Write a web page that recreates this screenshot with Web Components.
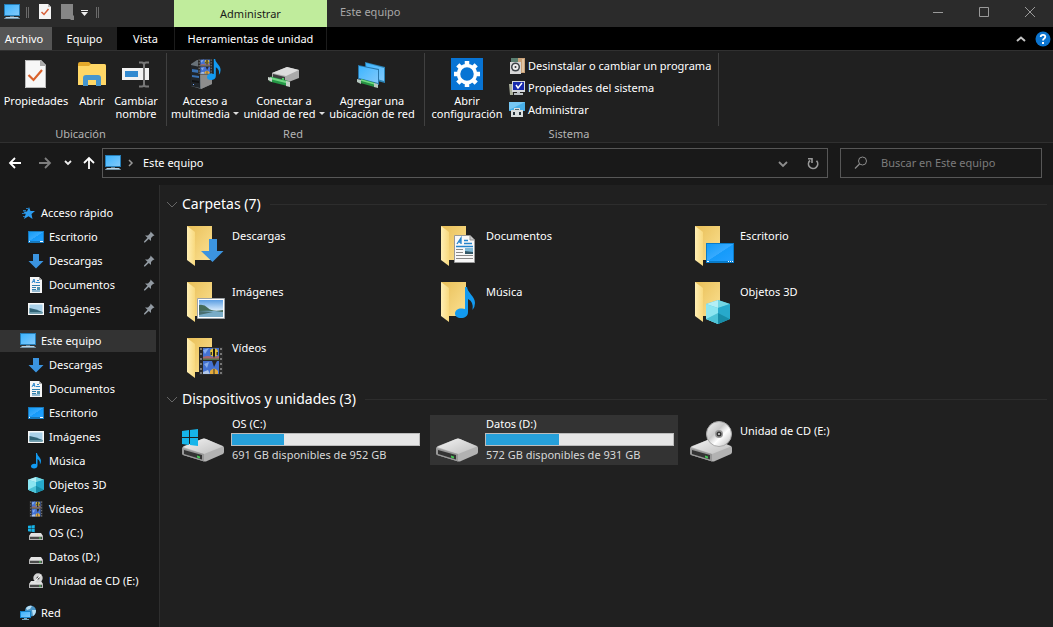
<!DOCTYPE html>
<html lang="es">
<head>
<meta charset="utf-8">
<meta name="viewport" content="width=device-width, initial-scale=1">
<title>Este equipo</title>
<style>
html, body { height: 100%; }
body { margin: 0; background: #202020; color: #fff; font: 11px/16px "Segoe UI", "Noto Sans", "Open Sans", sans-serif; }
</style>
</head>
<body>
<explorer-window></explorer-window>

<template id="t-window">
<style>
:host { display: flex; flex-direction: column; min-height: 100vh; }
.body { flex: 1; display: flex; }
explorer-content { flex: 1; min-width: 0; }
</style>
<title-bar></title-bar>
<explorer-ribbon></explorer-ribbon>
<address-row></address-row>
<div class="body">
  <nav-tree></nav-tree>
  <explorer-content></explorer-content>
</div>
</template>

<template id="t-title">
<style>
:host { display: flex; flex-direction: column; background: #2b2b2b; }
button, a { font: inherit; color: inherit; border: 0; background: none; padding: 0; text-decoration: none; display: block; }
.top, .tabs { display: grid; grid-template-columns: 174px 153px 1fr auto; }
.top { height: 27px; }
.quick { display: flex; align-items: center; height: 24px; padding-left: 4px; }
.quick button { height: 16px; }
.sep { width: 1px; height: 11px; border: solid #6a6a6a; border-width: 0 1px; }
.s1 { margin: 0 7px 0 6px; }
.s2 { margin-left: 4px; }
.ctx { background: #c0ec9c; color: #1a1a1a; text-align: center; line-height: 28px; }
.title { padding-left: 13px; line-height: 24px; color: #a8a8a8; font-size: 11px; font-weight: 400; margin: 0; }
.win { display: flex; height: 24px; }
.win button { width: 46px; height: 24px; display: grid; place-items: center; }
.tabs { background: #000; height: 23px; line-height: 24px; text-align: center; }
.tabs button { line-height: 24px; }
.left { display: grid; grid-template-columns: 52px 65px 1fr; }
.file { background: #555; padding-right: 4px; }
.active { background: #202020; }
.tool { border: solid #1c1c1c; border-width: 0 1px; }
.end { display: flex; align-items: center; gap: 8px; padding-right: 2px; }
</style>
<div class="top">
  <div class="quick">
    <button aria-label="Sistema"><win-icon name="pc" size="16"></win-icon></button>
    <span class="sep s1"></span>
    <button aria-label="Propiedades"><win-icon name="check" size="16"></win-icon></button>
    <button aria-label="Nueva carpeta" style="margin-left:8px"><win-icon name="blank" size="16"></win-icon></button>
    <button aria-label="Personalizar"><win-icon name="more" size="16"></win-icon></button>
    <span class="sep s2"></span>
  </div>
  <div class="ctx">Administrar</div>
  <h1 class="title">Este equipo</h1>
  <div class="win">
    <button aria-label="Minimizar"><win-icon name="min" size="12"></win-icon></button>
    <button aria-label="Maximizar"><win-icon name="max" size="12"></win-icon></button>
    <button aria-label="Cerrar"><win-icon name="close" size="12"></win-icon></button>
  </div>
</div>
<div class="tabs">
  <div class="left"><button class="file">Archivo</button><button class="active">Equipo</button><button>Vista</button></div>
  <button class="tool">Herramientas de unidad</button>
  <span></span>
  <div class="end">
    <button aria-label="Minimizar la cinta"><win-icon name="caret-up" size="12"></win-icon></button>
    <button aria-label="Ayuda"><win-icon name="help" size="16"></win-icon></button>
  </div>
</div>
</template>

<template id="t-ribbon">
<style>
:host { display: flex; background: #202020; border: solid #303030; border-width: 1px 0; min-height: 91px; }
.stack { display: flex; flex-direction: column; padding-top: 4px; }
</style>
<ribbon-group label="Ubicación" style="--w:167px">
  <ribbon-button icon="props" style="--w:72px">Propiedades</ribbon-button>
  <ribbon-button icon="open" style="--w:40px">Abrir</ribbon-button>
  <ribbon-button icon="rename" style="--w:48px">Cambiar<br>nombre</ribbon-button>
</ribbon-group>
<ribbon-group label="Red" style="--w:258px">
  <ribbon-button icon="media" menu style="--w:76px">Acceso a<br>multimedia</ribbon-button>
  <ribbon-button icon="netdrive" menu style="--w:82px">Conectar a<br>unidad de red</ribbon-button>
  <ribbon-button icon="netplace" style="--w:94px">Agregar una<br>ubicación de red</ribbon-button>
</ribbon-group>
<ribbon-group label="Sistema" style="--w:294px">
  <ribbon-button icon="settings" style="--w:84px">Abrir<br>configuración</ribbon-button>
  <div class="stack">
    <ribbon-line icon="uninstall">Desinstalar o cambiar un programa</ribbon-line>
    <ribbon-line icon="sysprops">Propiedades del sistema</ribbon-line>
    <ribbon-line icon="manage">Administrar</ribbon-line>
  </div>
</ribbon-group>
</template>

<template id="t-group">
<style>
:host { display: grid; grid-template-rows: 75px 16px; width: var(--w); box-sizing: border-box; background: linear-gradient(#404040, #404040) right 0 top 2px / 1px 73px no-repeat; }
.items { display: flex; }
.label { text-align: center; color: #b4b4b4; padding-right: 6px; line-height: 16px; }
</style>
<div class="items"><slot></slot></div>
<div class="label"></div>
</template>

<template id="t-button">
<style>
:host { display: block; width: var(--w); }
button { font: inherit; color: inherit; border: 0; background: none; padding: 7px 0 0; width: 100%; display: flex; flex-direction: column; align-items: center; line-height: 13px; white-space: nowrap; }
span { margin-top: 4px; }
i { display: none; }
:host([menu]) i { display: inline-block; border: 3px solid transparent; border-top-color: #ddd; border-bottom: 0; margin-left: 3px; vertical-align: 3px; }
</style>
<button><win-icon size="32"></win-icon><span><slot></slot><i></i></span></button>
</template>

<template id="t-line">
<style>
:host { display: block; }
button { font: inherit; color: inherit; border: 0; background: none; padding: 0; height: 22px; display: flex; align-items: center; gap: 3px; white-space: nowrap; }
</style>
<button><win-icon size="16"></win-icon><span><slot></slot></span></button>
</template>

<template id="t-address">
<style>
:host { display: flex; background: #191919; height: 42px; box-sizing: border-box; padding: 5px 11px 7px 7px; }
button, a { font: inherit; color: inherit; border: 0; background: none; padding: 0; text-decoration: none; }
.nav { display: flex; align-items: center; width: 95px; }
.nav button { height: 16px; }
.box { border: 1px solid #575757; box-sizing: border-box; height: 30px; display: flex; align-items: center; }
.path { flex: 1; min-width: 0; padding: 0 7px 0 2px; margin-right: 12px; gap: 5px; }
.path a { flex: 1; padding-left: 2px; }
.path .drop { margin-right: 12px; }
.search { width: 202px; padding-left: 12px; gap: 12px; }
input { font: inherit; color: #fff; background: none; border: 0; outline: 0; padding: 0; width: 140px; }
input::placeholder { color: #7c7c7c; }
</style>
<div class="nav">
  <button aria-label="Atrás"><win-icon name="back" size="16"></win-icon></button>
  <button aria-label="Adelante" style="margin-left:14px"><win-icon name="forward" size="16"></win-icon></button>
  <button aria-label="Recientes" style="margin-left:7px"><win-icon name="down" size="16"></win-icon></button>
  <button aria-label="Subir" style="margin-left:4px"><win-icon name="up" size="16"></win-icon></button>
</div>
<div class="box path">
  <win-icon name="pc" size="16"></win-icon>
  <win-icon name="crumb" size="10"></win-icon>
  <a href="#equipo">Este equipo</a>
  <button class="drop" aria-label="Ubicaciones anteriores"><win-icon name="chevron" size="12"></win-icon></button>
  <button aria-label="Actualizar"><win-icon name="refresh" size="14"></win-icon></button>
</div>
<div class="box search">
  <win-icon name="search" size="16"></win-icon>
  <input type="search" aria-label="Buscar en Este equipo" placeholder="Buscar en Este equipo">
</div>
</template>

<template id="t-nav">
<style>
:host { display: block; box-sizing: border-box; width: 160px; background: #191919; border-right: 1px solid #2e2e2e; padding: 16px 3px 0 0; }
nav { display: flex; flex-direction: column; gap: 8px; }
</style>
<nav aria-label="Panel de navegación">
  <div>
    <tree-item icon="star">Acceso rápido</tree-item>
    <tree-item icon="desktop" child pinned>Escritorio</tree-item>
    <tree-item icon="download" child pinned>Descargas</tree-item>
    <tree-item icon="doc" child pinned>Documentos</tree-item>
    <tree-item icon="image" child pinned>Imágenes</tree-item>
  </div>
  <div>
    <tree-item icon="pc" selected>Este equipo</tree-item>
    <tree-item icon="download" child>Descargas</tree-item>
    <tree-item icon="doc" child>Documentos</tree-item>
    <tree-item icon="desktop" child>Escritorio</tree-item>
    <tree-item icon="image" child>Imágenes</tree-item>
    <tree-item icon="music" child>Música</tree-item>
    <tree-item icon="cube" child>Objetos 3D</tree-item>
    <tree-item icon="video" child>Vídeos</tree-item>
    <tree-item icon="os" child>OS (C:)</tree-item>
    <tree-item icon="drive" child>Datos (D:)</tree-item>
    <tree-item icon="cd" child>Unidad de CD (E:)</tree-item>
  </div>
  <div>
    <tree-item icon="network">Red</tree-item>
  </div>
</nav>
</template>

<template id="t-item">
<style>
:host { display: block; padding: 1px 0; }
a { display: flex; align-items: center; height: 22px; gap: 5px; padding-left: 20px; color: inherit; text-decoration: none; white-space: nowrap; }
:host([child]) a { padding-left: 28px; }
:host([selected]) a { background: #333; }
span { flex: 1; }
.pin { display: none; margin-right: 1px; }
:host([pinned]) .pin { display: block; }
</style>
<a href="#"><win-icon class="main" size="16"></win-icon><span><slot></slot></span><win-icon class="pin" name="pin" size="12"></win-icon></a>
</template>

<template id="t-content">
<style>
:host { display: block; padding: 7px 6px 16px 6px; box-sizing: border-box; }
</style>
<file-section label="Carpetas (7)">
  <folder-tile icon="f-download">Descargas</folder-tile>
  <folder-tile icon="f-doc">Documentos</folder-tile>
  <folder-tile icon="f-desktop">Escritorio</folder-tile>
  <folder-tile icon="f-image">Imágenes</folder-tile>
  <folder-tile icon="f-music">Música</folder-tile>
  <folder-tile icon="f-cube">Objetos 3D</folder-tile>
  <folder-tile icon="f-video">Vídeos</folder-tile>
</file-section>
<file-section label="Dispositivos y unidades (3)">
  <drive-tile icon="d-os" label="OS (C:)" used="28">691 GB disponibles de 952 GB</drive-tile>
  <drive-tile icon="d-data" label="Datos (D:)" used="39" selected>572 GB disponibles de 931 GB</drive-tile>
  <folder-tile icon="d-cd">Unidad de CD (E:)</folder-tile>
</file-section>
</template>

<template id="t-section">
<style>
:host { display: block; margin-bottom: 5px; }
h2 { margin: 0 0 4px; height: 24px; display: flex; align-items: center; gap: 4px; font-size: 14px; line-height: 24px; font-weight: 400; }
h2::after { content: ""; flex: 1; height: 1px; background: #2d2d2d; margin-left: 5px; }
button { border: 0; background: none; padding: 0; height: 12px; }
.grid { display: grid; grid-template-columns: repeat(auto-fill, 248px); gap: 6px; padding-left: 10px; }
</style>
<h2><button aria-label="Contraer grupo"><win-icon name="fold" size="12"></win-icon></button><span></span></h2>
<div class="grid"><slot></slot></div>
</template>

<template id="t-folder">
<style>
:host { display: block; }
button { font: inherit; color: inherit; border: 0; background: none; padding: 1px 0 0 6px; width: 100%; height: 50px; display: flex; gap: 2px; text-align: left; }
span { padding-top: 7px; }
</style>
<button><win-icon size="48"></win-icon><span><slot></slot></span></button>
</template>

<template id="t-drive">
<style>
:host { display: block; }
button { font: inherit; color: inherit; border: 0; background: none; padding: 1px 4px 0 6px; width: 100%; height: 50px; display: flex; gap: 1px; text-align: left; }
:host([selected]) button { background: #333; }
.info { flex: 1; display: flex; flex-direction: column; }
.name { padding-left: 1px; }
.free { padding-left: 1px; color: #d8d8d8; }
progress { appearance: none; display: block; width: 100%; height: 13px; margin: 1px 0; border: 1px solid #bcbcbc; box-sizing: border-box; background: #e6e6e6; }
progress::-webkit-progress-bar { background: #e6e6e6; }
progress::-webkit-progress-value { background: #26a0da; }
</style>
<button><win-icon size="48"></win-icon><span class="info"><span class="name"></span><progress max="100"></progress><span class="free"><slot></slot></span></span></button>
</template>

<script>
const FOLDER = `<defs><linearGradient id="fb" x1="0" x2="1" y2="1"><stop stop-color="#e9bf57"/><stop offset="1" stop-color="#fbe193"/></linearGradient><linearGradient id="ff" x2="1"><stop stop-color="#ffefb4"/><stop offset="1" stop-color="#f8d97e"/></linearGradient></defs><path d="M5 5H30V39H12z" fill="url(#fb)"/><path d="M5 5L13 11V45L5 39z" fill="url(#ff)"/>`;
const BODY = `<defs><linearGradient id="dt" x1="0" x2="1" y2="1"><stop stop-color="#f4f4f4"/><stop offset="1" stop-color="#bdbdbd"/></linearGradient></defs><path d="M0 33Q0 31 2 30L20 23Q22 22 24 23L41 30Q42 31 42 32V36Q42 37 41 38L25 45Q23 46 21 45L1 39Q0 38 0 37z" fill="#b2b2b2"/><path d="M1 31L20 23Q22 22 24 23L41 30.500L22 38z" fill="url(#dt)"/><path d="M0 32L22 38V45.500L1 39Q0 38 0 37z" fill="#989898"/><path d="M2 34L20 39V43.500L2 38z" fill="#343434"/><path d="M15 39.500L18 40.500V42.500L15 41.500z" fill="#43c554"/>`;
const SDRIVE = `<path d="M3 7H13L15 10H1z" fill="#e2e2e2"/><path d="M1 10H15V14H1z" fill="#b7b7b7"/><path d="M2 11H14V13H2z" fill="#4a4a4a"/><path d="M11 11.500H13V12.500H11z" fill="#4bd65c"/>`;
const WIN = `<path d="M0 2L7 1V8H0zM8 .9L16 0V8H8zM0 9H7V16L0 15zM8 9H16V17L8 16z" fill="#16b5ea"/>`;
const NOTE = `<path d="M10 0H12C12.500 6 20 9 20 16Q20 20 17.500 23Q19 15 13 12V25C13 29 10 31 6 31C2 31 0 29 0 26.500C0 23 4 21 7 21.500Q9 21.500 10 22z" fill="#129af0"/>`;
const CUBE = `<path d="M12 0L24 4V19L12 24L0 19V4z" fill="#35b7d1"/><path d="M0 4L12 8V24L0 19z" fill="#8be5f1"/><path d="M0 4L12 0V8z" fill="#b3eef5"/><path d="M12 0L24 4L12 8z" fill="#73d6e4"/><path d="M12 8L24 4V19L12 13z" fill="#27a9cb"/><path d="M0 19L12 13V24z" fill="#4cc3d7"/><path d="M12 13L24 19L12 24z" fill="#178da9"/>`;
const FILM = `<path d="M0 0H24V28H0z" fill="#292929"/><path d="M4 1H20V13H4z" fill="#4472d2"/><path d="M4 14H20V27H4z" fill="#4472d2"/><path d="M4 10Q9 8 13 10L20 9V13H4z" fill="#a8666f"/><path d="M4 11.500H20V13H4z" fill="#57734a"/><path d="M4 3L10 1L6 7zM5 17L10 15L8 21z" fill="#87aceb"/><ellipse cx="15" cy="5.500" rx="4" ry="4" fill="#e3c03a"/><path d="M14 1.500H16V9L15 11L14 9z" fill="#181818"/><path d="M11.500 5H13V8H11.500zM17.500 5H19V8H17.500z" fill="#3a3a2a"/><path d="M11 24Q15 19 19 24V27H11z" fill="#e3aa3b"/><path d="M14.500 22H15.500V27H14.500z" fill="#30302a"/><path d="M13 14H18L16 18L15 20z" fill="#252525"/><path d="M4 25L9 23L11 27H4z" fill="#b0c6e7"/><path d="M1 1H3V3H1zM1 6H3V8H1zM1 11H3V13H1zM1 16H3V18H1zM1 21H3V23H1zM1 25H3V27H1zM21 1H23V3H21zM21 6H23V8H21zM21 11H23V13H21zM21 16H23V18H21zM21 21H23V23H21zM21 25H23V27H21z" fill="#777"/>`;
const SCREEN = `<defs><linearGradient id="sc" x2="1" y2="1"><stop stop-color="#3db5ff"/><stop offset="1" stop-color="#81c9fb"/></linearGradient></defs>`;
const DESK = `<defs><linearGradient id="dk" x1="0" x2="1" y2="1"><stop stop-color="#139bf5"/><stop offset=".5" stop-color="#36aaff"/><stop offset=".52" stop-color="#159bfa"/><stop offset="1" stop-color="#239fff"/></linearGradient></defs>`;

/* name: [viewBox side, markup] */
const ICONS = {
  pc: [16, SCREEN + `<path d="M0 0H16V12H0z" fill="#267eb8"/><path d="M1 1H15V11H1z" fill="url(#sc)"/><path d="M6 12H10V13H6z" fill="#667a88"/><path d="M2 13H14L16 15H0z" fill="#b8d4e6"/><path d="M1 14H15V15H1z" fill="#7796a9"/>`],
  check: [16, `<path d="M3 0H12L15 3V15H3z" fill="#f5f5f5"/><path d="M12 0V3H15" fill="#bbb"/><path d="M5.500 8L8 10.500L12.500 5" fill="none" stroke="#d7603a" stroke-width="1.500"/>`],
  blank: [16, `<path d="M1 0H13V11L14 12V16H11L10 15H1z" fill="#868686"/>`],
  more: [16, `<path d="M5 6.500H12" stroke="#eee"/><path d="M5 8H12L8.500 12z" fill="#eee"/>`],
  min: [12, `<path d="M1 6.500H11" stroke="#9a9a9a"/>`],
  max: [12, `<path d="M1.500 1.500H10.500V10.500H1.500z" fill="none" stroke="#9a9a9a"/>`],
  close: [12, `<path d="M1 1L11 11M11 1L1 11" stroke="#9a9a9a"/>`],
  'caret-up': [12, `<path d="M2 8L6 4.500L10 8" fill="none" stroke="#c4c4c4" stroke-width="2"/>`],
  help: [16, `<circle cx="8" cy="8" r="7.500" fill="#0b74cf"/><path d="M5.700 6Q5.700 3.800 8 3.800Q10.300 3.800 10.300 5.800Q10.300 7 9 7.700Q8 8.300 8 9.500" fill="none" stroke="#fff" stroke-width="1.800"/><path d="M7 11H9V13H7z" fill="#fff"/>`],
  back: [16, `<path d="M14 8H3M8 3L3 8L8 13" fill="none" stroke="#fff" stroke-width="1.800"/>`],
  forward: [16, `<path d="M2 8H13M8 3L13 8L8 13" fill="none" stroke="#7e7e7e" stroke-width="1.800"/>`],
  down: [16, `<path d="M5 6L8 9L11 6" fill="none" stroke="#eee" stroke-width="1.800"/>`],
  up: [16, `<path d="M9 14V3M4 8L9 3L14 8" fill="none" stroke="#fff" stroke-width="1.800"/>`],
  crumb: [10, `<path d="M3 2L6 5L3 8" fill="none" stroke="#999" stroke-width="1.500"/>`],
  chevron: [12, `<path d="M2 5L6 9L10 5" fill="none" stroke="#8e8e8e" stroke-width="1.800"/>`],
  refresh: [14, `<path d="M4 4.500A4.600 4.600 0 1 0 10.500 4.800" fill="none" stroke="#999" stroke-width="1.700"/><path d="M2 2.800H6V7" fill="none" stroke="#999" stroke-width="1.600"/>`],
  search: [16, `<circle cx="9.500" cy="6" r="4" fill="none" stroke="#8c8c8c"/><path d="M6.500 9L2 13.500" stroke="#8c8c8c" stroke-width="1.200"/>`],
  fold: [12, `<path d="M1 4L6 9L11 4" fill="none" stroke="#666"/>`],
  pin: [12, `<path d="M7.500 .500L11.500 4.500L10 5L8 7V10L5.800 8L2 11.500L1 11.500V10.500L4.500 6.800L2 4.500H5L7.300 2z" fill="#929aa2"/>`],
  star: [16, `<path d="M9 2L10.500 6H15L11.500 9L12.500 14L8.500 11.200L4 14L5.700 9L3 6.500H7z" fill="#2d9df0"/><path d="M3 5.500H6M2 8.500H5M3 11.500H5M6 3.500H8" stroke="#2477b6"/>`],
  desktop: [16, DESK + `<path d="M0 2H16V14H0z" fill="#1678bc"/><path d="M1 3H15V12H1z" fill="url(#dk)"/><path d="M1 12.500H2M12 12.500H15" stroke="#fff"/>`],
  download: [16, `<path d="M5 1H11V8H15.500L8 15.500L.500 8H5z" fill="#3b94e0"/>`],
  doc: [16, `<path d="M2 0H11L14 3V16H2z" fill="#f5f5f5"/><path d="M11 0V3H14" fill="#aaa"/><path d="M4 6L6 2L7 6M5 4.500H7M9 3.500H11M8 5.500H12" stroke="#318bce" fill="none"/><path d="M4 8.500H12M4 10.500H8M4 12.500H8M4 14H12" stroke="#307fae"/><path d="M9 10H12V13H9z" fill="#4d91ae"/>`],
  image: [16, `<path d="M0 2H16V14H0z" fill="#f7f7f7"/><path d="M1.500 3.500H14.500V12.500H1.500z" fill="#a9d0e8"/><path d="M1.500 7Q8 8 14.500 11V12.500H1.500z" fill="#326477"/><path d="M1.500 11H14.500V12.500H1.500z" fill="#699aaa"/>`],
  music: [16, `<g transform="translate(3 0) scale(.5)">${NOTE}</g>`],
  cube: [16, `<g transform="scale(.6667)">${CUBE}</g>`],
  video: [16, `<g transform="translate(1.500 0) scale(.55 .57)">${FILM}</g>`],
  os: [16, `<g transform="translate(0 1)">${SDRIVE}</g><g transform="scale(.42)">${WIN}</g>`],
  drive: [16, `<g transform="translate(0 1)">${SDRIVE}</g>`],
  cd: [16, `<g transform="translate(0 1)">${SDRIVE}</g><circle cx="10" cy="5" r="4.700" fill="#d4d4d4"/><circle cx="10" cy="5" r="1.500" fill="#454545"/><path d="M10 5L13 1.500M10 5L7 8.500" stroke="#fff"/>`],
  network: [16, SCREEN + `<circle cx="10.500" cy="6" r="5.500" fill="#4994c5"/><path d="M6 3Q9 0 12 1L10 4L7 5zM12 5L16 5Q16 9 13 11z" fill="#b8def2"/><path d="M0 6H11V13H0z" fill="#1683cb"/><path d="M1 7H10V12H1z" fill="url(#sc)"/><path d="M4 13H7V14H9V15H2V14H4z" fill="#7aa7bd"/>`],

  props: [32, `<path d="M5 2H21L26 7V30H5z" fill="#f7f7f7"/><path d="M5.500 2.500H20.500L25.500 7.500V29.500H5.500z" fill="none" stroke="#b9b9b9"/><path d="M20 2L26 8H20z" fill="#a9a9a9"/><path d="M8.500 17L13.500 22L22 12" fill="none" stroke="#d9622c" stroke-width="2.200"/>`],
  open: [32, `<path d="M2 6Q2 4 4 4H13L15 6H28Q30 6 30 8V27H2z" fill="#e4a92b"/><path d="M2 8H13L15 6H28Q30 6 30 8V27H2z" fill="#ffd766"/><path d="M7 28V20Q7 17 10 17H22Q25 17 25 20V28H20V22H12V28z" fill="#4696ce"/>`],
  rename: [32, `<path d="M2 10H29V22H2z" fill="#f2f2f2"/><path d="M5 13H18V19H5z" fill="#328ad0"/><path d="M19 4.500H22Q24 4.500 24 7Q24 4.500 26 4.500H29M24 6V26M19 28.500H22Q24 28.500 24 26Q24 28.500 26 28.500H29" fill="none" stroke="#777" stroke-width="2"/>`],
  media: [32, `<path d="M2 6L8 2H23V26L12 31L2 28z" fill="#687279"/><path d="M2 7L11 9V30L2 28z" fill="#20252a"/><path d="M3 11L10 12V15L3 14zM3 17L10 18V20L3 19z" fill="#3970b1"/><path d="M3 22L10 23V25L3 24z" fill="#111"/><path d="M4 26H5V27H4z" fill="#7af"/><path d="M11 9L23 5V26L12 31z" fill="#8d8d8d"/><g transform="translate(9 1) scale(.6 .55)">${FILM}</g><g transform="translate(18 1) scale(.68)">${NOTE}</g>`],
  netdrive: [32, `<path d="M4 15L19 9L31 12V20L18 25L4 20z" fill="#aaa"/><path d="M4 15L19 9L31 12L18 18z" fill="#ddd"/><path d="M5 16L17 19V23L5 20z" fill="#3e3e3e"/><path d="M14 20H16V22H14z" fill="#4fd767"/><path d="M2 21L20 25.500" stroke="#259947" stroke-width="5"/><path d="M2 20L20 24.500" stroke="#72d784" stroke-width="2"/><path d="M0 19L4 20V24L0 22zM18 23L22 24V29L18 28z" fill="#c6d1c9"/>`],
  netplace: [32, SCREEN + `<path d="M9 4L29 9V25L10 20z" fill="#2c85b8"/><path d="M10 5L28 10V23L11 18z" fill="url(#sc)"/><path d="M2 7L23 11V27L2 21z" fill="#2775a8"/><path d="M3 8L22 12V25L3 20z" fill="url(#sc)"/><path d="M5 23L19 27" stroke="#269344" stroke-width="4"/><path d="M5 22L19 26" stroke="#73da84" stroke-width="1.500"/><path d="M1 21L5 22V26L1 24zM18 25L22 26V30L18 29z" fill="#b6c8bf"/>`],
  settings: [32, `<path d="M0 0H32V32H0z" fill="#0874d4"/><circle cx="16" cy="16" r="8.500" fill="none" stroke="#fff" stroke-width="3.500"/><path d="M16 3V7M16 25V29M3 16H7M25 16H29M6.800 6.800L9.600 9.600M22.400 22.400L25.200 25.200M6.800 25.200L9.600 22.400M22.400 9.600L25.200 6.800" stroke="#fff" stroke-width="4.500"/>`],
  uninstall: [16, `<path d="M2 0H16V15H2z" fill="#c9a179"/><path d="M2 0H9V5H2z" fill="#5a7e70"/><path d="M13 1H15V14H13z" fill="#dfc5a4"/><path d="M1 4H12V16H1z" fill="#d7d7d7"/><circle cx="6.500" cy="9" r="4.500" fill="#3c4145"/><circle cx="6.500" cy="9" r="3" fill="#eee"/><circle cx="6.500" cy="9" r="1" fill="#333"/>`],
  sysprops: [16, `<path d="M0 4H4V15H1z" fill="#abb09b"/><path d="M3 1H16V12H3z" fill="#d5d7d9"/><path d="M4 2H15V10H4z" fill="#1729ac"/><path d="M7 5L9 8L13 3" fill="none" stroke="#fff" stroke-width="1.500"/><path d="M8 12H11V13H14V15H5V13H8z" fill="#bbc0c4"/>`],
  manage: [16, `<path d="M0 0H16V9H0z" fill="#48afe9"/><path d="M0 0H16L0 8z" fill="#76c7f4"/><path d="M5 6H11V8H14V15H2V8H5z" fill="#d9dedf"/><path d="M6 7H10V8H6z" fill="#506570"/><path d="M4 10H6V13H4zM10 10H12V13H10z" fill="#25313a"/>`],

  'f-download': [48, FOLDER + `<path d="M27 18H35V30H41.500L30.500 41L19 30H27z" fill="#3c94df"/>`],
  'f-doc': [48, FOLDER + `<path d="M18.500 14.500H34L38.500 19V41.500H18.500z" fill="#f8f8f8" stroke="#999"/><path d="M34 14.500V19H38.500" fill="#ccc" stroke="#999"/><path d="M21 23L25 17V23M23 21H25M28 19.500H32M28 22.500H36M20 25.500H37" stroke="#2383cb" fill="none" stroke-width="1.300"/><path d="M20 28.500H27M20 31.500H27M20 34.500H37M20 37.500H37" stroke="#888"/><path d="M29 27H37V33H29z" fill="#7fb9d7"/><path d="M29 30L37 31V33H29z" fill="#325868"/>`],
  'f-desktop': [48, FOLDER + DESK + `<path d="M16 22H44V42H16z" fill="#087bc9"/><path d="M17 23H43V40H17z" fill="url(#dk)"/><path d="M17 40.500H19M38 40.500H39M40 40.500H41M42 40.500H43" stroke="#fff"/>`],
  'f-image': [48, FOLDER + `<defs><linearGradient id="sk" x2="0" y2="1"><stop stop-color="#5b9ee3"/><stop offset=".7" stop-color="#eaf6ff"/></linearGradient></defs><path d="M15.500 21.500H42.500V41.500H15.500z" fill="#fff" stroke="#9ca2a7"/><path d="M17 23H41V40H17z" fill="url(#sk)"/><path d="M17 28Q22 27 26 31T41 33V35H17z" fill="#466b59"/><path d="M17 34Q29 33 41 35V40H17z" fill="#79acc7"/><path d="M17 34L31 35L17 38z" fill="#496f70"/>`],
  'f-music': [48, FOLDER + `<g transform="translate(19 10)">${NOTE}</g>`],
  'f-cube': [48, FOLDER + `<g transform="translate(16 23)">${CUBE}</g>`],
  'f-video': [48, FOLDER + `<g transform="translate(17 14)">${FILM}</g>`],
  'd-os': [48, BODY + `<g transform="translate(0 13)">${WIN}</g>`],
  'd-data': [48, BODY],
  'd-cd': [48, BODY + `<defs><linearGradient id="cd" x2="1" y2="1"><stop stop-color="#f5f5f5"/><stop offset=".4" stop-color="#c9c9c9"/><stop offset=".6" stop-color="#fff"/><stop offset="1" stop-color="#b5b5b5"/></linearGradient></defs><circle cx="29" cy="18" r="12.500" fill="url(#cd)" stroke="#aaa"/><circle cx="29" cy="18" r="4" fill="#999"/><circle cx="29" cy="18" r="2.500" fill="#333"/><circle cx="29" cy="18" r="1" fill="#ddd"/>`]
};

class WinIcon extends HTMLElement {
  static get observedAttributes() { return ['name', 'size']; }
  constructor() { super(); this.attachShadow({ mode: 'open' }); }
  connectedCallback() { this.draw(); }
  attributeChangedCallback() { this.draw(); }
  draw() {
    const icon = ICONS[this.getAttribute('name')];
    if (!icon) return;
    const size = this.getAttribute('size') || 16;
    this.shadowRoot.innerHTML = `<style>:host{display:block;flex:none}svg{display:block}</style><svg aria-hidden="true" width="${size}" height="${size}" viewBox="0 0 ${icon[0]} ${icon[0]}">${icon[1]}</svg>`;
  }
}
customElements.define('win-icon', WinIcon);

const define = (tag, templateId, setup) => customElements.define(tag, class extends HTMLElement {
  constructor() {
    super();
    this.attachShadow({ mode: 'open' }).append(document.getElementById(templateId).content.cloneNode(true));
  }
  connectedCallback() { if (setup) setup(this, this.shadowRoot); }
});
const setIcon = (el, root) => root.querySelector('win-icon').setAttribute('name', el.getAttribute('icon'));

define('title-bar', 't-title');
define('ribbon-button', 't-button', setIcon);
define('ribbon-line', 't-line', setIcon);
define('ribbon-group', 't-group', (el, root) => { root.querySelector('.label').textContent = el.getAttribute('label'); });
define('explorer-ribbon', 't-ribbon');
define('address-row', 't-address');
define('tree-item', 't-item', setIcon);
define('nav-tree', 't-nav');
define('folder-tile', 't-folder', setIcon);
define('drive-tile', 't-drive', (el, root) => {
  setIcon(el, root);
  root.querySelector('.name').textContent = el.getAttribute('label');
  const bar = root.querySelector('progress');
  bar.value = el.getAttribute('used');
  bar.setAttribute('aria-label', 'Espacio usado en ' + el.getAttribute('label'));
});
define('file-section', 't-section', (el, root) => { root.querySelector('h2 span').textContent = el.getAttribute('label'); });
define('explorer-content', 't-content');
define('explorer-window', 't-window');
</script>
</body>
</html>
